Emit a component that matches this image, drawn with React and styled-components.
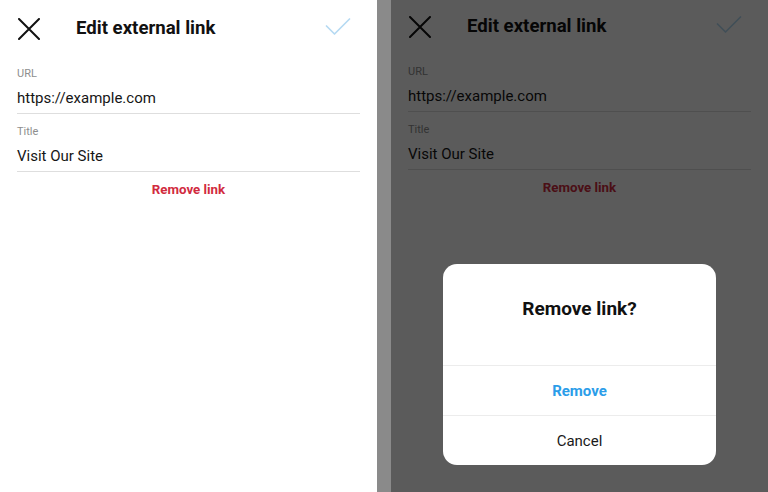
import React from "react";
import styled, { createGlobalStyle } from "styled-components";

const GlobalStyle = createGlobalStyle`
  html, body {
    margin: 0;
    padding: 0;
    background: #ffffff;
  }
  body {
    font-family: Roboto, "Liberation Sans", Arial, sans-serif;
    color: #111;
  }
`;

const fields = [
  { label: "URL", value: "https://example.com" },
  { label: "Title", value: "Visit Our Site" },
];

const CloseIcon = () => (
  <svg width="22" height="22" viewBox="0 0 22 22" fill="none">
    <path d="M1 1L21 21M21 1L1 21" stroke="#111" strokeWidth="2" strokeLinecap="round" />
  </svg>
);

const CheckIcon = () => (
  <svg width="26" height="18" viewBox="0 0 26 18" fill="none">
    <path d="M1.5 8L9.5 16L24.5 1" stroke="#b6daf3" strokeWidth="1.7" strokeLinecap="round" strokeLinejoin="round" />
  </svg>
);

// 편집 화면 (좌/우 동일)
const EditScreen = ({ lift }) => (
  <Screen $lift={lift}>
    <Header>
      <IconBtn>
        <CloseIcon />
      </IconBtn>
      <HeaderTitle>Edit external link</HeaderTitle>
      <DoneBtn>
        <CheckIcon />
      </DoneBtn>
    </Header>
    {fields.map((f) => (
      <Field key={f.label}>
        <Label>{f.label}</Label>
        <Value>{f.value}</Value>
      </Field>
    ))}
    <RemoveLink>Remove link</RemoveLink>
  </Screen>
);

const App = () => {
  return (
    <Page>
      <GlobalStyle />
      <Panel>
        <EditScreen />
      </Panel>
      <Gutter />
      <Panel $grow>
        <EditScreen lift={2} />
        <Overlay>
          <Dialog>
            <DialogTitle>Remove link?</DialogTitle>
            <DialogBtn $primary>Remove</DialogBtn>
            <DialogBtn>Cancel</DialogBtn>
          </Dialog>
        </Overlay>
      </Panel>
    </Page>
  );
};

// Style
const Page = styled.div`
  display: flex;
  width: 768px;
  height: 492px;
  overflow: hidden;
`;
const Panel = styled.div`
  position: relative;
  width: ${(p) => (p.$grow ? "auto" : "377px")};
  flex: ${(p) => (p.$grow ? 1 : "none")};
  background: #ffffff;
  overflow: hidden;
`;
const Gutter = styled.div`
  width: 14px;
  flex: none;
  background: #8a8a8a;
`;
const Screen = styled.div`
  display: flex;
  flex-direction: column;
  margin-top: ${(p) => -(p.$lift || 0)}px;
`;
const Header = styled.div`
  display: flex;
  align-items: center;
  height: 56px;
  padding: 0 26px 0 18px;
`;
const IconBtn = styled.div`
  display: flex;
  width: 22px;
  height: 22px;
  margin-top: 1px;
`;
const HeaderTitle = styled.h1`
  flex: 1;
  margin: 0 0 0 36px;
  font-size: 18.6px;
  font-weight: 700;
  line-height: 24px;
  color: #111;
`;
const DoneBtn = styled.div`
  display: flex;
  margin-bottom: 2px;
`;
const Field = styled.div`
  display: flex;
  flex-direction: column;
  margin: 0 17px;
  padding: 11px 0 5px;
  border-bottom: 1px solid #dedede;
`;
const Label = styled.span`
  font-size: 11px;
  line-height: 14px;
  color: #8e8e8e;
`;
const Value = styled.span`
  margin-top: 7px;
  font-size: 15px;
  line-height: 20px;
  color: #161616;
`;
const RemoveLink = styled.div`
  padding: 10px 0;
  text-align: center;
  font-size: 13.3px;
  font-weight: 700;
  line-height: 16px;
  color: #d12b3e;
`;
const Overlay = styled.div`
  position: absolute;
  inset: 0;
  display: flex;
  justify-content: center;
  align-items: flex-end;
  padding-bottom: 27px;
  background: rgba(0, 0, 0, 0.645);
`;
const Dialog = styled.div`
  display: flex;
  flex-direction: column;
  width: 273px;
  background: #ffffff;
  border-radius: 14px;
  overflow: hidden;
`;
const DialogTitle = styled.div`
  padding: 34px 16px 45px;
  text-align: center;
  font-size: 19px;
  font-weight: 700;
  line-height: 22px;
  color: #111;
`;
const DialogBtn = styled.div`
  height: 49px;
  display: flex;
  align-items: center;
  justify-content: center;
  border-top: 1px solid #ececec;
  font-size: 15px;
  font-weight: ${(p) => (p.$primary ? 700 : 400)};
  color: ${(p) => (p.$primary ? "#2b9de9" : "#1a1a1a")};
`;

export default App;
